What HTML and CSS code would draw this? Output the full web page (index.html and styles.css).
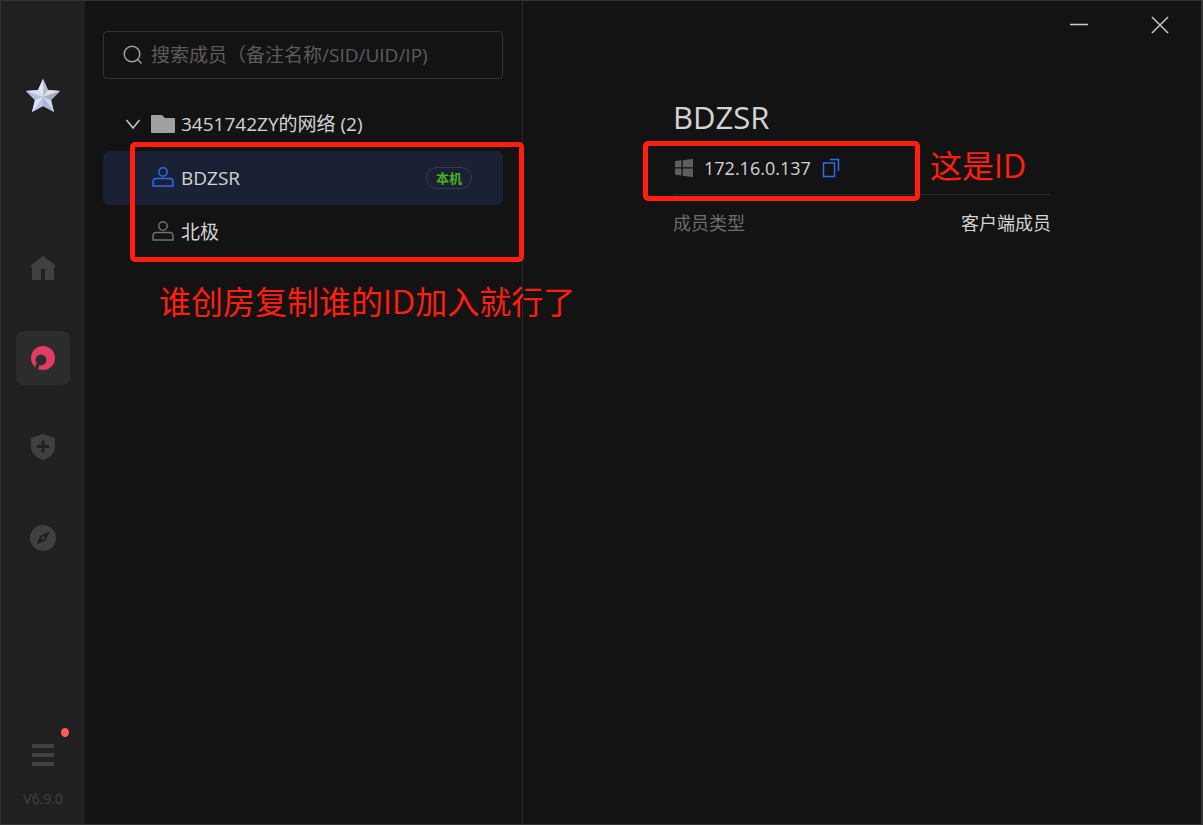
FILE: index.html
```html
<!DOCTYPE html>
<html lang="zh-CN">
<head>
    <meta charset="UTF-8">
    <meta name="viewport" content="width=device-width, initial-scale=1.0">
    <title>BDZSR</title>
    <link rel="stylesheet" href="styles.css">
</head>
<body>
  <div class="window">

    <aside class="sidebar">
      <svg class="logo" width="36" height="36" viewBox="0 0 36 36">
        <path fill="#c5cfe3" d="M18 1L23 12L35 13L26 22L29 34L18 28L7 34L10 22L1 13L13 12Z"/>
        <path fill="#e4e9f5" d="M18 1L18 19L13 12Z"/>
        <path fill="#b4bdd2" d="M18 1L23 12L18 19Z"/>
        <path fill="#dfdfe4" d="M23 12L35 13L18 19Z"/>
        <path fill="#a3acc2" d="M35 13L26 22L18 19Z"/>
        <path fill="#cbd5ea" d="M26 22L29 34L18 19Z"/>
        <path fill="#a9b7d8" d="M29 34L18 28L18 19Z"/>
        <path fill="#b9c8ea" d="M18 28L7 34L18 19Z"/>
        <path fill="#dce5f8" d="M7 34L10 22L18 19Z"/>
        <path fill="#b0bddb" d="M10 22L1 13L18 19Z"/>
        <path fill="#d3dcf0" d="M1 13L13 12L18 19Z"/>
      </svg>

      <nav>
        <button class="nav-btn" aria-label="首页">
          <svg width="26" height="26" viewBox="0 0 26 26">
            <path fill="#404040" d="M13 1L25 10V12H24V25H15V14H11V25H2V12H1V10Z"/>
          </svg>
        </button>
        <button class="nav-btn active" aria-label="网络">
          <svg width="26" height="26" viewBox="0 0 26 26">
            <circle cx="13" cy="13" r="12" fill="#e03b61"/>
            <circle cx="11" cy="15" r="5.4" fill="#2c2c2c"/>
            <path fill="#2c2c2c" d="M6.500 18L5 22.500L7.500 25.500L9.500 20Z"/>
          </svg>
        </button>
        <button class="nav-btn" aria-label="安全">
          <svg width="26" height="28" viewBox="0 0 26 28">
            <path fill="#404040" d="M13 0L25 4V13C25 19 20 24 13 26C6 24 1 19 1 13V4Z"/>
            <path stroke="#202020" stroke-width="3" d="M7 12.500H19M13 6.500V18.500"/>
          </svg>
        </button>
        <button class="nav-btn" aria-label="发现">
          <svg width="26" height="26" viewBox="0 0 26 26">
            <circle cx="13" cy="13" r="13" fill="#404040"/>
            <path fill="#202020" d="M19.500 6.500L15.500 15.500L6.500 19.500L10.500 10.500Z"/>
            <circle cx="13" cy="13" r="1.700" fill="#404040"/>
          </svg>
        </button>
      </nav>

      <button class="nav-btn menu" aria-label="菜单">
        <svg width="22" height="24" viewBox="0 0 22 24">
          <path stroke="#404040" stroke-width="4" d="M0 3H22M0 12H22M0 21H22"/>
        </svg>
        <span class="dot"></span>
      </button>
      <span class="version">V6.9.0</span>
    </aside>

    <section class="members">
      <label class="search">
        <svg width="20" height="20" viewBox="0 0 20 20" fill="none" stroke="#a0a0a0" stroke-width="1.500">
          <circle cx="9" cy="9" r="7.800"/>
          <path d="M14.500 14.500L18.500 18.500"/>
        </svg>
        <input type="text" aria-label="搜索成员" placeholder="搜索成员（备注名称/SID/UID/IP)">
      </label>

      <button class="row group">
        <svg class="arrow" width="16" height="12" viewBox="0 0 16 12" fill="none" stroke="#c8c8c8" stroke-width="1.500">
          <path d="M1.500 2L8 10L14.500 2"/>
        </svg>
        <svg width="24" height="18" viewBox="0 0 24 18">
          <path fill="#a0a0a0" d="M1 0H11L14 3H23Q24 3 24 4V17Q24 18 23 18H1Q0 18 0 17V1Q0 0 1 0Z"/>
        </svg>
        <span>3451742ZY的网络 (2)</span>
      </button>

      <div class="list">
        <button class="row selected">
          <svg class="user" width="24" height="22" viewBox="0 0 24 22">
            <circle cx="12" cy="5" r="4.200"/>
            <path d="M2 19V15Q2 11.500 5.500 11.500H18.500Q22 11.500 22 15V19Z"/>
          </svg>
          <span class="name">BDZSR</span>
          <span class="tag">本机</span>
        </button>
        <button class="row">
          <svg class="user" width="24" height="22" viewBox="0 0 24 22">
            <circle cx="12" cy="5" r="4.200"/>
            <path d="M2 19V15Q2 11.500 5.500 11.500H18.500Q22 11.500 22 15V19Z"/>
          </svg>
          <span class="name">北极</span>
        </button>
        <div class="mark mark-list"></div>
        <p class="note note-list">谁创房复制谁的ID加入就行了</p>
      </div>
    </section>

    <main class="detail">
      <div class="controls">
        <button aria-label="最小化">
          <svg width="18" height="18" viewBox="0 0 18 18" stroke="#c8c8c8" stroke-width="1.500"><path d="M0 8.500H18"/></svg>
        </button>
        <button aria-label="关闭">
          <svg width="18" height="18" viewBox="0 0 18 18" stroke="#c8c8c8" stroke-width="1.500"><path d="M1 1L17 17M17 1L1 17"/></svg>
        </button>
      </div>

      <div class="info">
        <h1>BDZSR</h1>
        <div class="ip">
          <svg width="20" height="18" viewBox="0 0 20 18" fill="#5e5e5e">
            <path d="M2 2L8.500 1.200V8.200H2ZM9.800 1L20 0V8.200H9.800ZM2 9.400H8.500V16.600L2 15.800ZM9.800 9.400H20V18L9.800 17Z"/>
          </svg>
          <span>172.16.0.137</span>
          <button class="copy" aria-label="复制">
            <svg width="18" height="20" viewBox="0 0 18 20" fill="none" stroke="#2f6bf0" stroke-width="1.500">
              <rect x="1.500" y="5" width="11" height="13.500"/>
              <path d="M8 1.500H16.500V13"/>
            </svg>
          </button>
          <div class="mark mark-ip"></div>
          <p class="note note-ip">这是ID</p>
        </div>
        <dl>
          <dt>成员类型</dt>
          <dd>客户端成员</dd>
        </dl>
      </div>
    </main>

  </div>
</body>
</html>
```
FILE: styles.css
```css
* {
  box-sizing: border-box;
}

body {
  margin: 0;
  background: #131313;
  color: #d4d4d4;
  font-family: "Open Sans", "Noto Sans CJK SC", sans-serif;
  font-size: 18px;
  line-height: 24px;
}

button {
  background: none;
  border: 0;
  padding: 0;
  color: inherit;
  font: inherit;
  cursor: pointer;
}

svg {
  display: block;
  flex-shrink: 0;
}

.window {
  display: flex;
  min-height: 100vh;
  border: 1px solid #333;
  border-right-width: 2px;
}

/* sidebar */
.sidebar {
  display: flex;
  flex-direction: column;
  align-items: center;
  flex: 0 0 84px;
  padding: 77px 0 16px;
  background: #202020;
}

nav {
  display: flex;
  flex-direction: column;
  gap: 36px;
  margin-top: 127px;
}

.nav-btn {
  position: relative;
  display: flex;
  align-items: center;
  justify-content: center;
  width: 54px;
  height: 54px;
  border-radius: 8px;
}

.nav-btn.active {
  background: #2c2c2c;
}

.menu {
  margin-top: auto;
}

.dot {
  position: absolute;
  top: 0;
  right: 1px;
  width: 8px;
  height: 9px;
  border-radius: 50%;
  background: #ff5a5a;
}

.version {
  margin-top: 8px;
  color: #404040;
  font-size: 14px;
  line-height: 18px;
}

/* member list */
.members {
  flex: 0 0 438px;
  padding: 30px 19px 0 18px;
  border-right: 1px solid #2a2a2a;
  font-size: 19px;
}

.search {
  display: flex;
  align-items: center;
  gap: 8px;
  height: 48px;
  padding: 0 19px;
  border: 1px solid #333;
  border-radius: 4px;
}

.search input {
  flex: 1;
  min-width: 0;
  padding: 0;
  border: 0;
  outline: none;
  background: none;
  color: inherit;
  font: inherit;
}

.search input::placeholder {
  color: #5c5c5c;
}

.row {
  display: flex;
  align-items: center;
  gap: 6px;
  width: 100%;
  height: 54px;
  padding: 0 31px 0 48px;
  border-radius: 6px;
  text-align: left;
}

.group {
  margin-top: 18px;
  padding-left: 22px;
}

.arrow {
  margin-right: 4px;
}

.list {
  position: relative;
}

.selected {
  background: #1a2135;
}

.user {
  fill: none;
  stroke: #707070;
  stroke-width: 1.5px;
}

.selected .user {
  stroke: #2f6bf0;
}

.name {
  flex: 1;
}

.tag {
  padding: 0 9px;
  border: 1px solid #333b4d;
  border-radius: 11px;
  color: #49b01f;
  font-size: 13px;
  font-weight: bold;
  line-height: 20px;
}

/* red marks drawn over the window */
.mark {
  position: absolute;
  border: 5px solid #ff1e10;
  border-radius: 5px;
  pointer-events: none;
}

.mark-list {
  top: -9px;
  right: -21px;
  bottom: -3px;
  left: 27px;
}

.note {
  position: absolute;
  margin: 0;
  color: #ff1e10;
  font-size: 32px;
  line-height: 40px;
  white-space: nowrap;
}

.note-list {
  top: 131px;
  left: 56px;
}

.mark-ip {
  top: 0;
  right: 131px;
  bottom: -7px;
  left: -30px;
}

.note-ip {
  top: 5px;
  left: 257px;
}

/* detail */
.detail {
  flex: 1;
  min-width: 0;
}

.controls {
  display: flex;
  justify-content: flex-end;
  gap: 27px;
  height: 48px;
  padding-right: 14px;
}

.controls button {
  display: flex;
  align-items: center;
  justify-content: center;
  width: 54px;
}

.info {
  max-width: 378px;
  margin: 48px auto 0;
}

h1 {
  margin: 0 0 4px;
  font-size: 31px;
  font-weight: normal;
  line-height: 40px;
}

.ip {
  position: relative;
  display: flex;
  align-items: center;
  gap: 11px;
  height: 54px;
  border-bottom: 1px solid #2a2a2a;
}

dl {
  display: flex;
  justify-content: space-between;
  margin: 16px 0 0;
}

dt {
  color: #6c6c6c;
}

dd {
  margin: 0;
}
```
